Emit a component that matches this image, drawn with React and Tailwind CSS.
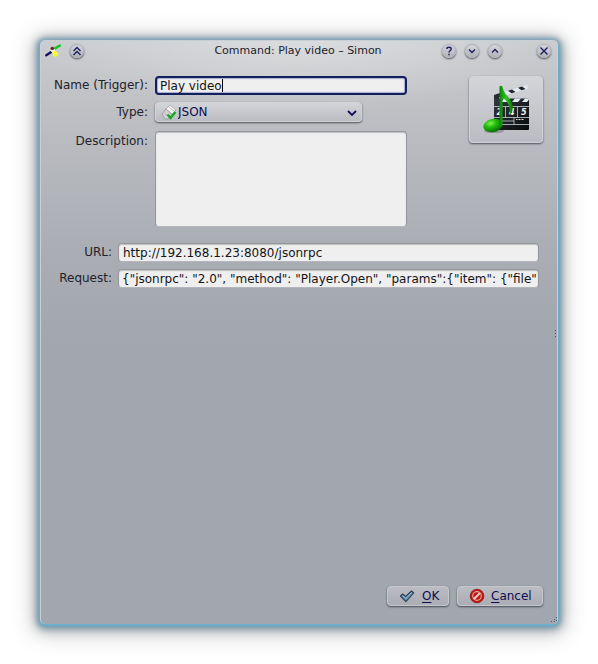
import React from "react";

const raised =
  "rounded-[4px] border border-[#d2d3d7] bg-linear-to-b from-[#d4d5d9] to-[#bbbcc2] shadow-[0_1px_2px_rgba(40,44,55,0.75)]";
const action =
  "flex h-5 items-center rounded-[4px] border border-[#c6c7cc] bg-linear-to-b from-[#bcbdc3] to-[#abacb4] pl-[11px] text-[#0d0d50] shadow-[0_1px_2px_rgba(40,44,55,0.75)]";
const sunken =
  "rounded-[4px] border border-[#94969d] border-b-[#b4b6bc] bg-[#efefef] text-[#141414] outline-none shadow-[inset_0_1px_1px_rgba(0,0,0,0.2)]";

function TitleButton({ label, d }) {
  return (
    <button
      type="button"
      aria-label={label}
      className="flex size-[14px] items-center justify-center rounded-full border border-[#b5b6bd] bg-linear-to-b from-[#d5d5dc] to-[#b2b2bc] shadow-[0_1px_2px_rgba(40,40,55,0.8)]"
    >
      <svg viewBox="0 0 14 14" className="size-[14px] shrink-0" fill="none" stroke="#1c1c5e" strokeWidth="1.4">
        <path d={d} />
      </svg>
    </button>
  );
}

function SimonLogo() {
  return (
    <svg viewBox="0 0 16 14" className="h-[14px] w-[16px]" fill="none" strokeLinecap="round">
      <path d="M1.3 11.3 5.8 8.3" stroke="#11116e" strokeWidth="2.4" />
      <path d="M10 4.4 15 1.5" stroke="#12c229" strokeWidth="2.4" />
      <path d="m7 7 2-1" stroke="#f5f5f5" strokeWidth="2" />
      <circle cx="7.3" cy="4.4" r="1.7" fill="#7b1212" />
      <path d="M8.3 6.8c2-.7 5 1 5 3.2 0 2-2 2.7-3.6 2.5-2.3-.3-3-4.8-1.4-5.7Z" fill="#fafa35" />
    </svg>
  );
}

function PlugIcon() {
  return (
    <svg viewBox="0 0 16 16" className="size-4" fill="none">
      <path d="m1 10 4-5 6 5-4 5H4Z" fill="#d4d4d4" stroke="#8c8c8c" strokeWidth=".7" />
      <path d="m5 5 4-4 6 5-4 4Z" fill="#f6f6f6" stroke="#999" strokeWidth=".7" />
      <path d="m3 9 5 4M6 6l4 4M8 3l5 4" stroke="#a0a0a0" strokeWidth=".7" />
      <path d="m6.5 10.5 3 3.5 5-6" stroke="#10a91d" strokeWidth="2.2" />
    </svg>
  );
}

function ClapperIcon() {
  return (
    <svg viewBox="0 0 48 50" className="h-[50px] w-[48px]">
      <defs>
        <linearGradient id="board" x1="0" y1="0" x2="1" y2="1">
          <stop offset="0" stopColor="#333940" />
          <stop offset="1" stopColor="#08090a" />
        </linearGradient>
        <radialGradient id="head" cx=".4" cy=".3" r=".7">
          <stop offset="0" stopColor="#7df24a" />
          <stop offset=".45" stopColor="#20b90b" />
          <stop offset="1" stopColor="#086b05" />
        </radialGradient>
        <linearGradient id="stem">
          <stop offset="0" stopColor="#0a8209" />
          <stop offset=".5" stopColor="#2cc91c" />
          <stop offset="1" stopColor="#087507" />
        </linearGradient>
      </defs>
      <path d="M12 11 45 1l1 3.500-33 10Z" fill="#e2eaf4" />
      <path d="m12 11 6-2 4 2.600-9 3Zm14-4.200 4-1.200 3.500 2.500-4 1.200Zm10-3 4-1.200 3.500 2.500-4 1.200Z" fill="#202327" />
      <path d="M12 11h5v9h-5Z" fill="#292c31" />
      <rect x="12" y="14.500" width="35" height="31.500" rx="1" fill="url(#board)" />
      <path d="M22 14.500h6l-3 3.500h-6Zm11 0h6l-3 3.500h-6Zm10 0h4v1l-2 2.500h-5Z" fill="#e4ebf3" />
      <path d="M12 22.500h35M12 33.500h35M12 37h20M12 40.500h35M23.500 22.500v11M35.500 22.500v11M32 33.500v7" stroke="#cbd0d6" strokeWidth=".8" />
      <g fill="#f4f4f4" fontFamily="DejaVu Sans" fontWeight="700" fontStyle="italic" fontSize="8">
        <text x="14.500" y="31">2</text>
        <text x="27" y="31">4</text>
        <text x="39" y="31">5</text>
      </g>
      <path d="M34 35.500h8" stroke="#ddd" strokeWidth="1" strokeDasharray="1 .5" />
      <ellipse cx="12" cy="47" rx="10" ry="2" fill="#333" opacity=".3" />
      <ellipse cx="11" cy="41.500" rx="9.800" ry="6.600" fill="url(#head)" transform="rotate(-12 11 41.500)" />
      <path d="M17.500 2.500c1-1 2-1 3 0 .5 7 8.500 11 10 19 .8 4-.500 7.500-3 10 1.500-7-1-14-7-18v28h-3Z" fill="url(#stem)" />
    </svg>
  );
}

function OkIcon() {
  return (
    <svg viewBox="0 0 16 16" className="size-4">
      <path d="m1.500 8 2.200-2 3 2.500 5.800-5.500 2.200 2-7.800 8.600Z" fill="#6d94b5" stroke="#263f58" strokeWidth="1.100" strokeLinejoin="round" />
      <path d="m3.500 7.500 3.200 2.600 5.800-5.600" fill="none" stroke="#9bbbd4" strokeWidth=".8" />
    </svg>
  );
}

function CancelIcon() {
  return (
    <svg viewBox="0 0 16 16" className="size-4" fill="none">
      <circle cx="8" cy="8" r="6.800" fill="#c4160f" stroke="#8a1410" strokeWidth=".8" />
      <circle cx="8" cy="8" r="4.300" stroke="#dba09c" strokeWidth="1.200" />
      <path d="m5 11 6-6" stroke="#e6cdcb" strokeWidth="1.900" />
    </svg>
  );
}

export default function App() {
  return (
    <div className="flex min-h-screen bg-white p-10 font-['DejaVu_Sans',sans-serif] text-[12px] leading-4 text-[#22222a]">
      <main className="relative flex min-w-0 flex-1 flex-col rounded-[5px] border-x border-t border-[#c9d0d5] bg-[#a2a6ae] bg-[radial-gradient(ellipse_260px_70px_at_50%_0px,rgba(230,231,232,0.6),transparent),linear-gradient(180deg,#cbccd0_0px,#c4c6c9_30px,#b9bbc0_100px,#abaeb4_200px,#a2a6ae_300px)] shadow-[0_1px_1px_1px_#6caecb,0_1px_4px_3px_rgba(90,150,180,0.6),0_2px_9px_4px_rgba(65,85,105,0.4),0_3px_20px_7px_rgba(75,78,80,0.34)]">
        <header className="flex h-5 items-center pr-[6px] pl-1 text-[11px]">
          <div className="flex flex-1 items-center gap-[9px]">
            <SimonLogo />
            <TitleButton label="Shade" d="m3.500 7 3.500-3.500L10.500 7m-7 4L7 7.500l3.500 3.500" />
          </div>
          <h1>Command: Play video – Simon</h1>
          <div className="flex flex-1 items-center justify-end gap-[9px]">
            <TitleButton label="Help" d="M4.800 5c0-2.300 4.400-2.300 4.400 0C9.200 6.600 7 6.500 7 8.500M7 9.800v1.500" />
            <TitleButton label="Minimize" d="m4 5.500 3 3 3-3" />
            <TitleButton label="Maximize" d="m4 8.500 3-3 3 3" />
            <span className="w-[17px]" />
            <TitleButton label="Close" d="m3.500 3.500 7 7m0-7-7 7" />
          </div>
        </header>

        <form className="flex flex-1 flex-col pt-[15px] pr-[14px] pb-[18px] pl-3">
          <div className="flex items-start justify-between">
            <div className="grid grid-cols-[95px_252px] gap-x-[7px] gap-y-[7px]">
              <label htmlFor="name" className="pt-px text-right whitespace-nowrap">Name (Trigger):</label>
              <div className="relative h-[19px]">
                <input
                  id="name"
                  defaultValue="Play video"
                  className="block h-[19px] w-full rounded-[4px] border-2 border-[#13205f] bg-[#efefef] px-[3px] text-[#141414] outline-none shadow-[inset_0_0_1px_1px_#a9acd0]"
                />
                <span className="absolute top-[3px] left-[67px] h-[13px] w-px bg-black" />
              </div>

              <label htmlFor="type" className="pt-[2px] text-right">Type:</label>
              <div className="relative h-5 w-[207px]">
                <select id="type" className={`${raised} block h-5 w-full appearance-none pl-[22px] text-[#0d0d50] outline-none`}>
                  <option>JSON</option>
                </select>
                <span className="pointer-events-none absolute top-[2px] left-[6px]"><PlugIcon /></span>
                <svg viewBox="0 0 10 6" className="pointer-events-none absolute top-[8px] right-[5px] h-[6px] w-[10px]" fill="none" stroke="#11115a" strokeWidth="1.800">
                  <path d="m1 1 4 4 4-4" />
                </svg>
              </div>

              <label htmlFor="description" className="pt-1 text-right">Description:</label>
              <textarea id="description" className={`${sunken} mt-[2px] block h-24 resize-none px-1`} />
            </div>
            <button type="button" aria-label="Choose icon" className={`${raised} flex h-[67px] w-[74px] items-center justify-center pb-[2px]`}>
              <ClapperIcon />
            </button>
          </div>

          <div className="mt-4 mr-1 grid grid-cols-[59px_1fr] gap-x-[6px] gap-y-[7px]">
            <label htmlFor="url" className="pt-px text-right">URL:</label>
            <input id="url" defaultValue="http://192.168.1.23:8080/jsonrpc" className={`${sunken} block h-[19px] min-w-0 pl-1`} />
            <label htmlFor="request" className="pt-px text-right">Request:</label>
            <input
              id="request"
              defaultValue={'{"jsonrpc": "2.0", "method": "Player.Open", "params":{"item": {"file"'}
              className={`${sunken} block h-[19px] min-w-0 pl-[3px]`}
            />
          </div>

          <div className="mt-auto flex justify-end gap-2">
            <button type="button" className={`${action} w-[62px] gap-[7px]`}>
              <OkIcon />
              <span><u className="underline-offset-2">O</u>K</span>
            </button>
            <button type="button" className={`${action} w-[86px] gap-[6px]`}>
              <CancelIcon />
              <span><u className="underline-offset-2">C</u>ancel</span>
            </button>
          </div>
        </form>

        <svg viewBox="0 0 2 8" className="absolute top-[289px] right-0 h-2 w-[2px]" fill="#555861">
          <path d="M0 0h1v1H0ZM0 3h1v1H0ZM0 6h1v1H0Z" />
        </svg>
        <svg viewBox="0 0 6 6" className="absolute right-0 bottom-px size-[6px]" fill="#555861">
          <path d="M5 0h1v1H5ZM3 2h1v1H3ZM0 4h1v1H0ZM3 4h1v1H3ZM5 3h1v1H5Z" />
        </svg>
      </main>
    </div>
  );
}
